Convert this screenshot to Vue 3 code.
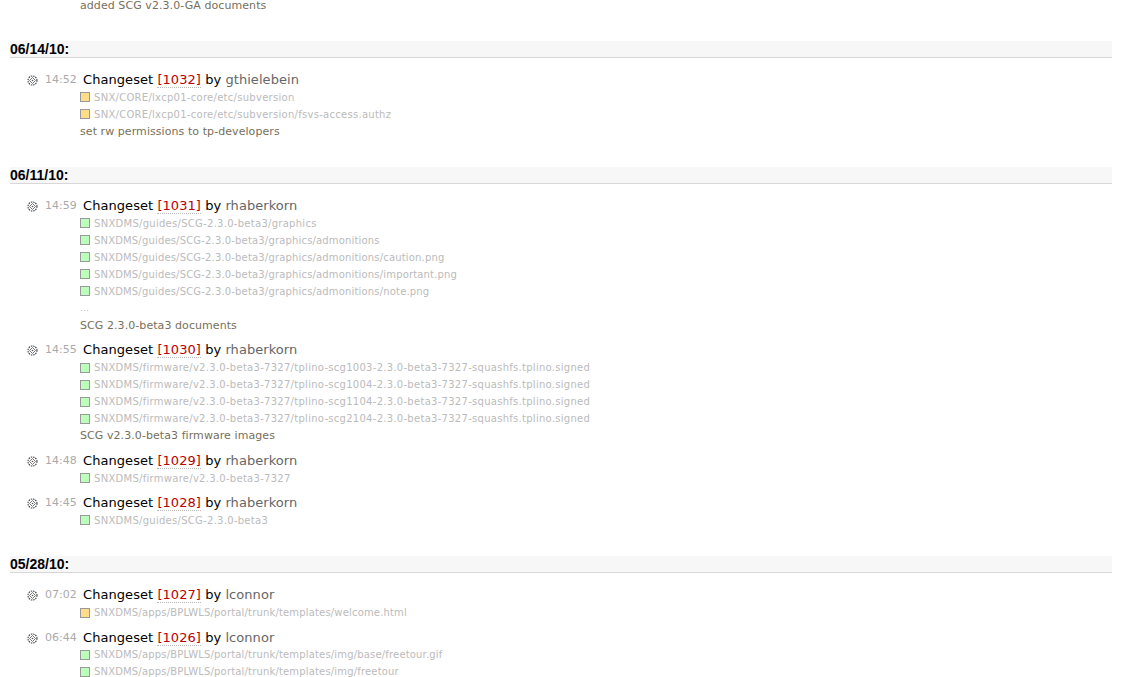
<script setup>
const days = [
  { date: '06/14/10:', entries: [
    { time: '14:52', rev: 1032, by: 'gthielebein', kind: 'mod', paths: ['SNX/CORE/lxcp01-core/etc/subversion', 'SNX/CORE/lxcp01-core/etc/subversion/fsvs-access.authz'], msg: 'set rw permissions to tp-developers' },
  ] },
  { date: '06/11/10:', entries: [
    { time: '14:59', rev: 1031, by: 'rhaberkorn', kind: 'add', more: true, paths: ['SNXDMS/guides/SCG-2.3.0-beta3/graphics', 'SNXDMS/guides/SCG-2.3.0-beta3/graphics/admonitions', 'SNXDMS/guides/SCG-2.3.0-beta3/graphics/admonitions/caution.png', 'SNXDMS/guides/SCG-2.3.0-beta3/graphics/admonitions/important.png', 'SNXDMS/guides/SCG-2.3.0-beta3/graphics/admonitions/note.png'], msg: 'SCG 2.3.0-beta3 documents' },
    { time: '14:55', rev: 1030, by: 'rhaberkorn', kind: 'add', paths: ['SNXDMS/firmware/v2.3.0-beta3-7327/tplino-scg1003-2.3.0-beta3-7327-squashfs.tplino.signed', 'SNXDMS/firmware/v2.3.0-beta3-7327/tplino-scg1004-2.3.0-beta3-7327-squashfs.tplino.signed', 'SNXDMS/firmware/v2.3.0-beta3-7327/tplino-scg1104-2.3.0-beta3-7327-squashfs.tplino.signed', 'SNXDMS/firmware/v2.3.0-beta3-7327/tplino-scg2104-2.3.0-beta3-7327-squashfs.tplino.signed'], msg: 'SCG v2.3.0-beta3 firmware images' },
    { time: '14:48', rev: 1029, by: 'rhaberkorn', kind: 'add', paths: ['SNXDMS/firmware/v2.3.0-beta3-7327'] },
    { time: '14:45', rev: 1028, by: 'rhaberkorn', kind: 'add', paths: ['SNXDMS/guides/SCG-2.3.0-beta3'] },
  ] },
  { date: '05/28/10:', entries: [
    { time: '07:02', rev: 1027, by: 'lconnor', kind: 'mod', paths: ['SNXDMS/apps/BPLWLS/portal/trunk/templates/welcome.html'] },
    { time: '06:44', rev: 1026, by: 'lconnor', kind: 'add', paths: ['SNXDMS/apps/BPLWLS/portal/trunk/templates/img/base/freetour.gif', 'SNXDMS/apps/BPLWLS/portal/trunk/templates/img/freetour'] },
  ] },
]
</script>

<template>
  <div class="page">
    <p class="top">added SCG v2.3.0-GA documents</p>
    <section v-for="day in days" :key="day.date" class="day">
      <h2 class="date">{{ day.date }}</h2>
      <div v-for="e in day.entries" :key="e.rev" class="entry">
        <div class="head">
          <svg class="icon" width="11" height="11" viewBox="0 0 11 11">
            <circle cx="5.5" cy="5.5" r="4.5" fill="#fff" stroke="#444" stroke-width="1.1" stroke-dasharray="1.5 .86" />
            <path d="M5.5 2.5 8.5 5.5 5.5 8.5 2.5 5.5Z" fill="#fff" stroke="#777" stroke-width="1" />
            <circle cx="5.5" cy="5.5" r=".8" fill="#555" />
          </svg>
          <span class="time">{{ e.time }}</span>
          <span class="title">Changeset <a class="rev">[{{ e.rev }}]</a> by <span class="by">{{ e.by }}</span></span>
        </div>
        <div class="body">
          <div v-for="p in e.paths" :key="p" class="path" :class="{ tight: /admonitions|apps/.test(p) }">
            <i class="box" :class="e.kind"></i><span>{{ p }}</span>
          </div>
          <div v-if="e.more" class="more">…</div>
          <div v-if="e.msg" class="msg">{{ e.msg }}</div>
        </div>
      </div>
    </section>
  </div>
</template>

<style scoped>
.page {
  height: 677px;
  overflow: hidden;
  padding: 0 10px;
  box-sizing: border-box;
  background: #fff;
  font-family: "DejaVu Sans", Verdana, sans-serif;
}
.top {
  margin: 0 0 0 70px;
  height: 40.8px;
  font-size: 11px;
  line-height: 11px;
  letter-spacing: .07px;
  color: #776f5c;
}
.day { margin-bottom: 27.4px; }
.date {
  margin: 0;
  height: 16px;
  background: #f7f7f7;
  border-bottom: 1px solid #d7d7d7;
  font: bold 14px/17px "Liberation Sans", Arial, sans-serif;
  color: #000;
  box-sizing: content-box;
}
.entry { padding-left: 17px; margin-top: 6.8px; }
.date + .entry { margin-top: 12.2px; }
.head {
  display: flex;
  align-items: center;
  height: 18.3px;
}
.icon { flex: none; margin-top: 2px; }
.time {
  margin-left: 7px;
  width: 34px;
  font-size: 11px;
  color: #aaa;
}
.title {
  margin-left: 4px;
  font-size: 13px;
  letter-spacing: .06px;
  white-space: nowrap;
  color: #000;
}
.rev { color: #b00; border-bottom: 1px dotted #bbb; }
.by { color: #666; }
.body { margin-left: 53px; padding-top: .3px; }
.path {
  display: flex;
  align-items: center;
  height: 17px;
  font-size: 10px;
  letter-spacing: .28px;
  color: #bbb;
  white-space: nowrap;
}
.tight { letter-spacing: .17px; }
.box {
  flex: none;
  width: 8px;
  height: 8px;
  margin-right: 4px;
  border: 1px solid #999;
}
.mod { background: #fd8; }
.add { background: #bfb; }
.more { height: 17px; font-size: 9px; line-height: 17px; color: #bbb; }
.msg { height: 17px; font-size: 11px; line-height: 18px; letter-spacing: .07px; color: #776f5c; }
</style>
